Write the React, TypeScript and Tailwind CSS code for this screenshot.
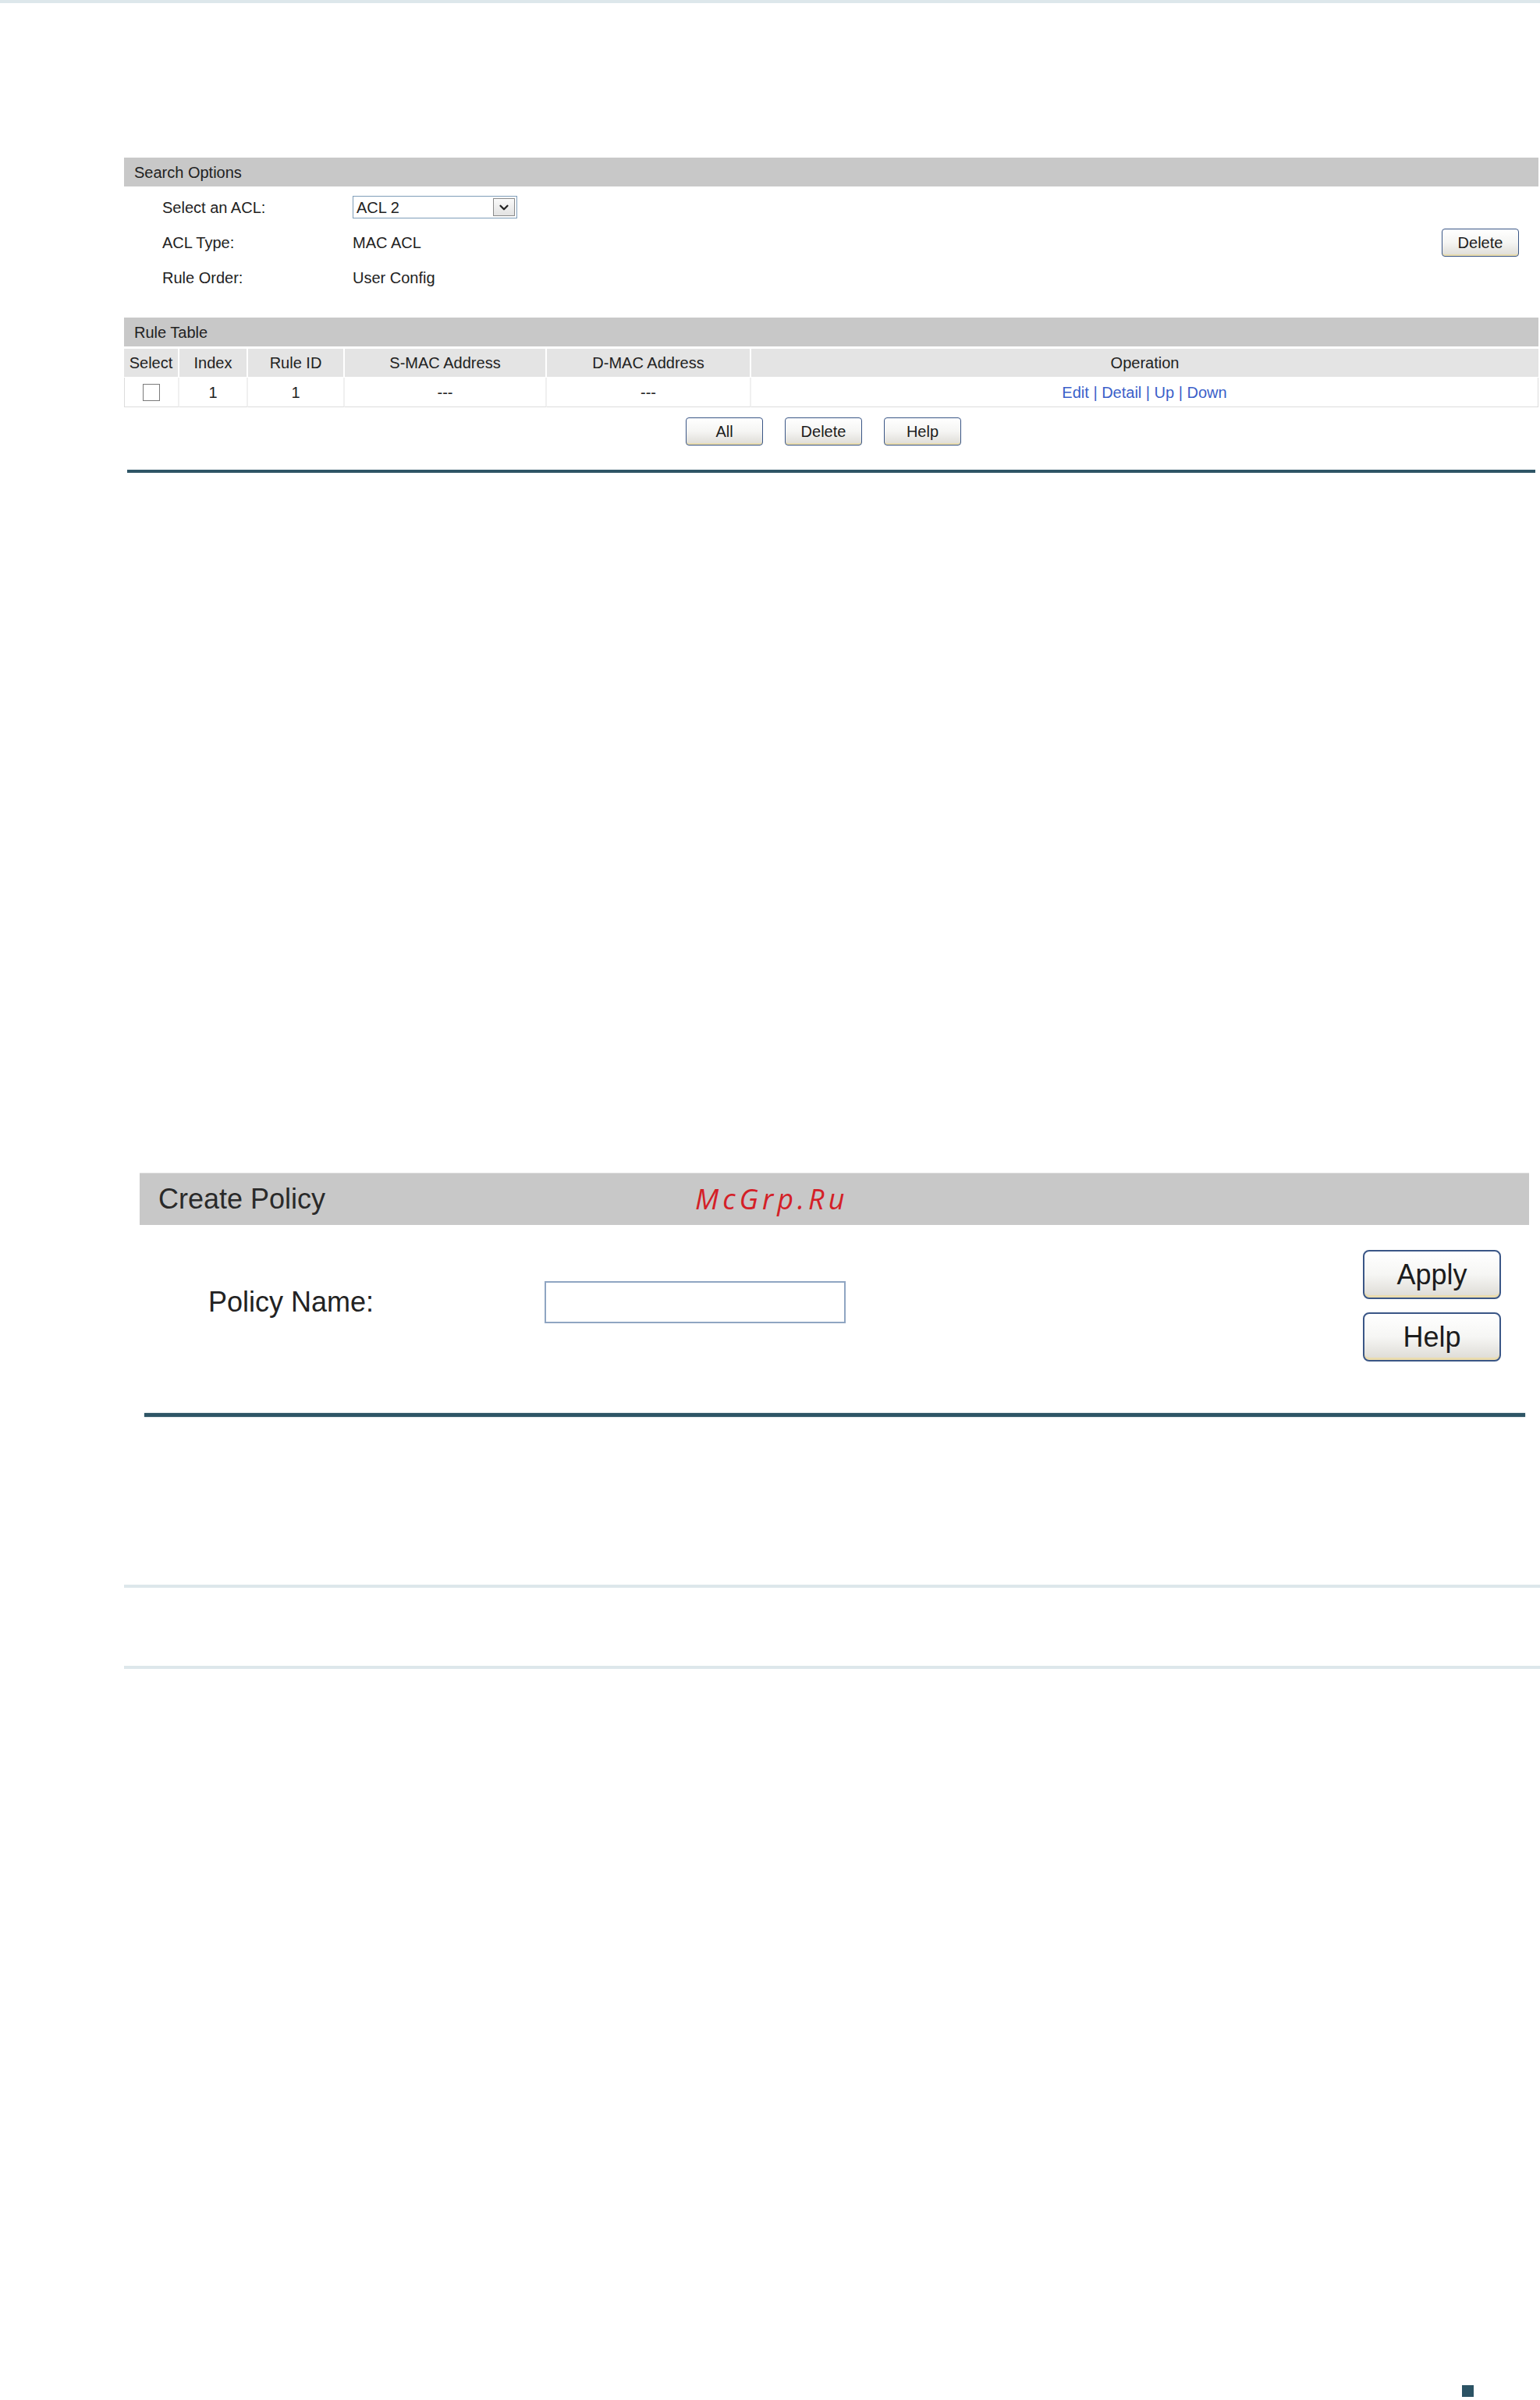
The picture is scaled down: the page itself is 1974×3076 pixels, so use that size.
import { ChevronDown } from 'lucide-react';

const font = "font-['Liberation_Sans',Arial,sans-serif]";

const smallBtn =
  'h-[36px] w-[99px] rounded-[4px] border border-[#3a5686] bg-linear-to-b from-white via-[#f5f5f3] to-[#dedcd6] text-[20px] text-[#1c1c1c] shadow-[inset_0_-2px_0_#e9dcae]';

const bigBtn =
  'h-[63px] w-[177px] rounded-[8px] border-2 border-[#3a5686] bg-linear-to-b from-white via-[#f6f6f4] to-[#dddbd5] text-[36px] text-[#1c1c1c] shadow-[inset_0_-3px_0_#eadcae]';

const columns = ['Select', 'Index', 'Rule ID', 'S-MAC Address', 'D-MAC Address', 'Operation'];

export default function App() {
  return (
    <div className={`${font} min-h-[3076px] bg-white text-[#222]`}>
      <div className="h-[4px] bg-[#dde7eb]" />

      <div className="pl-[159px]">
        {/* search options */}
        <section className="mt-[198px] mr-[2px]">
          <div className="h-[37px] bg-[#c8c8c8] pl-[13px] flex items-center text-[20px]">
            Search Options
          </div>
          <div className="pt-[4px] text-[20px]">
            <div className="h-[45px] flex items-center">
              <span className="w-[293px] pl-[49px]">Select an ACL:</span>
              <div className="h-[29px] w-[211px] border border-[#7f9db9] bg-white flex items-center justify-between pl-[4px] pr-[2px]">
                <span>ACL 2</span>
                <span className="h-[23px] w-[28px] border border-[#8a8a8a] bg-linear-to-b from-[#fafafa] to-[#e2e2e2] flex items-center justify-center">
                  <ChevronDown size={18} strokeWidth={3} className="text-[#222]" />
                </span>
              </div>
            </div>
            <div className="h-[45px] flex items-center">
              <span className="w-[293px] pl-[49px]">ACL Type:</span>
              <span className="flex-1">MAC ACL</span>
              <button className={`${smallBtn} mr-[25px] h-[34px]`}>Delete</button>
            </div>
            <div className="h-[45px] flex items-center">
              <span className="w-[293px] pl-[49px]">Rule Order:</span>
              <span>User Config</span>
            </div>
          </div>
        </section>

        {/* rule table */}
        <section className="mt-[29px] mr-[2px]">
          <div className="h-[37px] bg-[#c8c8c8] pl-[13px] flex items-center text-[20px]">
            Rule Table
          </div>
          <div className="mt-[3px] grid grid-cols-[71px_88px_124px_259px_262px_1fr] text-[20px]">
            {columns.map((c, i) => (
              <div
                key={c}
                className={`h-[36px] bg-[#e4e4e4] flex items-center justify-center ${i < 5 ? 'border-r-2 border-white' : ''}`}
              >
                {c}
              </div>
            ))}
            <div className="h-[38px] mt-[1px] border-l border-b border-[#dcdcdc] border-r-2 border-r-[#f0f0f0] flex items-center justify-center">
              <span className="h-[22px] w-[22px] border border-[#7a7a7a] bg-white" />
            </div>
            <div className="h-[38px] mt-[1px] border-b border-[#dcdcdc] border-r-2 border-r-[#f0f0f0] flex items-center justify-center">1</div>
            <div className="h-[38px] mt-[1px] border-b border-[#dcdcdc] border-r-2 border-r-[#f0f0f0] flex items-center justify-center">1</div>
            <div className="h-[38px] mt-[1px] border-b border-[#dcdcdc] border-r-2 border-r-[#f0f0f0] flex items-center justify-center">---</div>
            <div className="h-[38px] mt-[1px] border-b border-[#dcdcdc] border-r-2 border-r-[#f0f0f0] flex items-center justify-center">---</div>
            <div className="h-[38px] mt-[1px] border-b border-r border-[#dcdcdc] flex items-center justify-center text-[#3b5fc9] text-[20px]">
              <a>Edit</a>&nbsp;|&nbsp;<a>Detail</a>&nbsp;|&nbsp;<a>Up</a>&nbsp;|&nbsp;<a>Down</a>
            </div>
          </div>
          <div className="mt-[13px] flex justify-center gap-[28px] pr-[20px]">
            <button className={smallBtn}>All</button>
            <button className={smallBtn}>Delete</button>
            <button className={smallBtn}>Help</button>
          </div>
          <div className="mt-[31px] ml-[4px] mr-[4px] h-[4px] bg-[#2e5566]" />
        </section>

        {/* create policy */}
        <section className="mt-[897px] ml-[20px] w-[1781px]">
          <div className="h-[67px] bg-[#c8c8c8] border-t border-[#dedede] flex items-center pl-[24px]">
            <span className="text-[36px] text-[#2a2a2a]">Create Policy</span>
            <span className="ml-[474px] font-['Open_Sans',sans-serif] italic text-[36px] tracking-[5px] text-[#d42027]">
              McGrp.Ru
            </span>
          </div>
          <div className="pt-[32px] flex justify-between pr-[36px]">
            <div className="mt-[40px] h-[54px] flex items-center">
              <span className="w-[519px] pl-[88px] text-[36px] text-[#222]">Policy Name:</span>
              <input className="h-[54px] w-[386px] border-2 border-[#8fa5c2] bg-white outline-none" />
            </div>
            <div className="flex flex-col gap-[17px]">
              <button className={bigBtn}>Apply</button>
              <button className={bigBtn}>Help</button>
            </div>
          </div>
          <div className="mt-[66px] ml-[6px] w-[1770px] h-[5px] bg-[#2e5566] shadow-[0_0_2px_#9fb4bc]" />
        </section>

        <div className="mt-[215px] h-[4px] bg-[#dde7eb]" />
        <div className="mt-[100px] h-[4px] bg-[#dde7eb]" />

        <div className="mt-[918px] ml-[1715px] h-[15px] w-[15px] bg-[#2c5364]" />
      </div>
    </div>
  );
}
